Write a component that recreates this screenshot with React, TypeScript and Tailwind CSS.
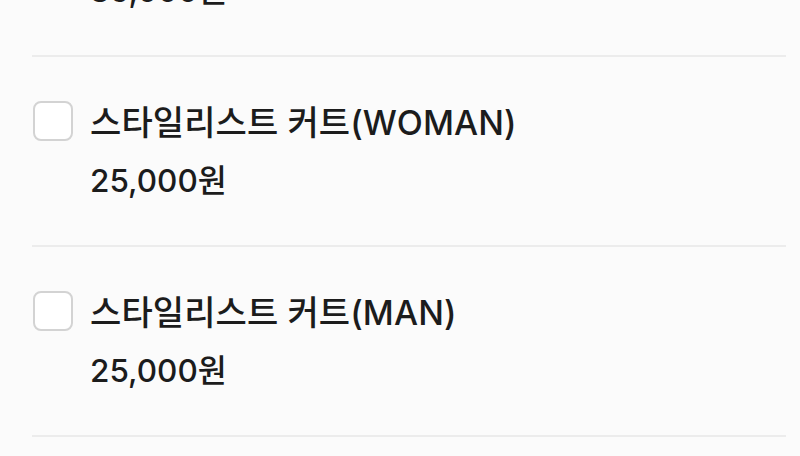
import React, { useState } from 'react';

interface MenuItem {
  id: number;
  name: string;
  price: number;
}

const items: MenuItem[] = [
  { id: 1, name: '스타일리스트 커트(KIDS)', price: 35000 },
  { id: 2, name: '스타일리스트 커트(WOMAN)', price: 25000 },
  { id: 3, name: '스타일리스트 커트(MAN)', price: 25000 },
];

const font = { fontFamily: 'Inter, "Noto Sans CJK KR", sans-serif' };

const App: React.FC = () => {
  const [checked, setChecked] = useState<number[]>([]);

  const toggle = (id: number) =>
    setChecked(prev => (prev.includes(id) ? prev.filter(x => x !== id) : [...prev, id]));

  return (
    <div className="w-[800px] h-[456px] overflow-hidden bg-[#fbfbfb] text-[#1c1c1c]" style={font}>
      <div className="-mt-[133px] pl-8 pr-[14px]">
        {items.map(item => (
          <div key={item.id} className="border-b-2 border-[#ececec] pt-[42px] pb-[44px]">
            <label className="flex items-center gap-[17px] h-[44px] pl-px cursor-pointer">
              <input
                type="checkbox"
                checked={checked.includes(item.id)}
                onChange={() => toggle(item.id)}
                className="appearance-none w-10 h-10 shrink-0 rounded-lg border-2 border-[#d3d3d3] bg-white"
              />
              <span className="text-[34px] font-medium leading-none pt-[3px] tracking-[0.1px]">{item.name}</span>
            </label>
            <div className="mt-[18px] pl-[58px] h-[40px] flex items-center text-[31.5px] font-medium leading-none">
              {item.price.toLocaleString('ko-KR')}원
            </div>
          </div>
        ))}
      </div>
    </div>
  );
};

export default App;
